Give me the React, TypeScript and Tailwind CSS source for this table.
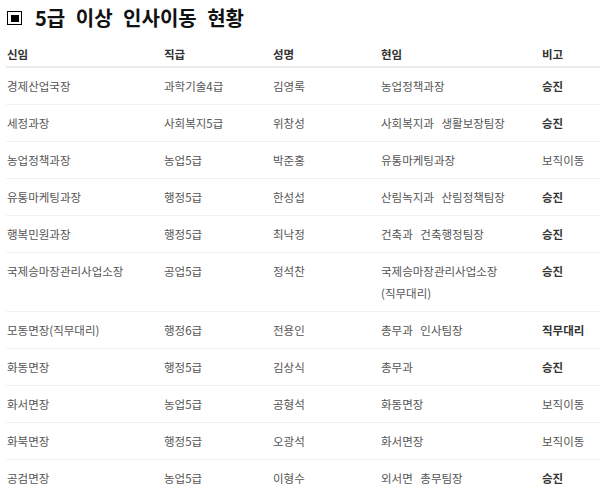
const rows: { a: string; b: string; c: string; d: string[]; e: string; bold: boolean }[] = [
  { a: "경제산업국장", b: "과학기술4급", c: "김영록", d: ["농업정책과장"], e: "승진", bold: true },
  { a: "세정과장", b: "사회복지5급", c: "위창성", d: ["사회복지과 생활보장팀장"], e: "승진", bold: true },
  { a: "농업정책과장", b: "농업5급", c: "박준홍", d: ["유통마케팅과장"], e: "보직이동", bold: false },
  { a: "유통마케팅과장", b: "행정5급", c: "한성섭", d: ["산림녹지과 산림정책팀장"], e: "승진", bold: true },
  { a: "행복민원과장", b: "행정5급", c: "최낙정", d: ["건축과 건축행정팀장"], e: "승진", bold: true },
  { a: "국제승마장관리사업소장", b: "공업5급", c: "정석찬", d: ["국제승마장관리사업소장", "(직무대리)"], e: "승진", bold: true },
  { a: "모동면장(직무대리)", b: "행정6급", c: "전용인", d: ["총무과 인사팀장"], e: "직무대리", bold: true },
  { a: "화동면장", b: "행정5급", c: "김상식", d: ["총무과"], e: "승진", bold: true },
  { a: "화서면장", b: "농업5급", c: "공형석", d: ["화동면장"], e: "보직이동", bold: false },
  { a: "화북면장", b: "행정5급", c: "오광석", d: ["화서면장"], e: "보직이동", bold: false },
  { a: "공검면장", b: "농업5급", c: "이형수", d: ["외서면 총무팀장"], e: "승진", bold: true },
];

const heads = ["신임", "직급", "성명", "현임", "비고"];

export default function App() {
  return (
    <div className="w-[600px] h-[493px] overflow-hidden bg-white pl-[6px] font-['Noto_Sans_CJK_KR','Noto_Sans',sans-serif]">
      <div className="flex items-center gap-[13px] pt-[4px] h-[32px] pl-[1px]">
        <div className="w-[15px] h-[14px] border-[1.5px] border-black flex items-center justify-center">
          <div className="w-[8px] h-[7px] bg-black" />
        </div>
        <h1 className="text-[20px] leading-[28px] font-bold text-[#111] [word-spacing:6px]">5급 이상 인사이동 현황</h1>
      </div>
      <table className="mt-[6px] w-[594px] table-fixed border-collapse text-[11.5px] [word-spacing:5px]">
        <colgroup>
          <col className="w-[157px]" />
          <col className="w-[109px]" />
          <col className="w-[108px]" />
          <col className="w-[161px]" />
          <col />
        </colgroup>
        <thead>
          <tr className="border-b-2 border-[#ececec]">
            {heads.map((h) => (
              <th key={h} className="text-left font-bold text-[#333] pl-[1px] pt-[6px] pb-[2px] leading-[20px]">
                {h}
              </th>
            ))}
          </tr>
        </thead>
        <tbody>
          {rows.map((r) => (
            <tr key={r.a} className="border-b border-[#f1f1f1] align-top text-[#555]">
              <td className="pl-[1px] py-[7px] leading-[22px] whitespace-nowrap">{r.a}</td>
              <td className="pl-[1px] py-[7px] leading-[22px]">{r.b}</td>
              <td className="pl-[1px] py-[7px] leading-[22px]">{r.c}</td>
              <td className="pl-[1px] py-[7px] leading-[22px]">
                {r.d.map((t) => (
                  <div key={t}>{t}</div>
                ))}
              </td>
              <td className={`pl-[1px] py-[7px] leading-[22px] whitespace-nowrap ${r.bold ? "font-bold text-[#333]" : ""}`}>
                {r.e}
              </td>
            </tr>
          ))}
        </tbody>
      </table>
    </div>
  );
}
